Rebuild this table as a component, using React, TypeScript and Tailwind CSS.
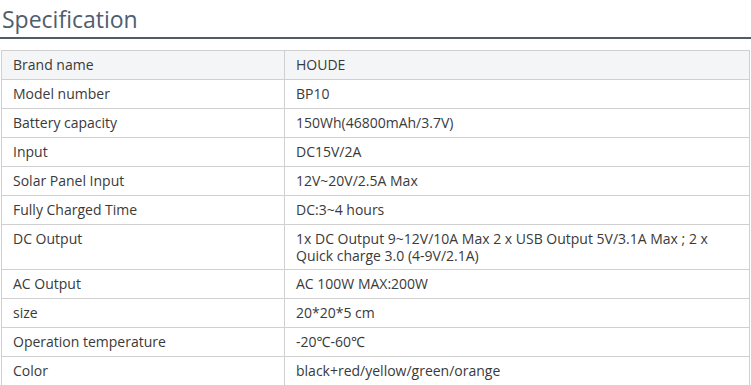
const specs: [string, string][] = [
  ["Brand name", "HOUDE"],
  ["Model number", "BP10"],
  ["Battery capacity", "150Wh(46800mAh/3.7V)"],
  ["Input", "DC15V/2A"],
  ["Solar Panel Input", "12V~20V/2.5A Max"],
  ["Fully Charged Time", "DC:3~4 hours"],
  [
    "DC Output",
    "1x DC Output 9~12V/10A Max 2 x USB Output 5V/3.1A Max ; 2 x Quick charge 3.0 (4-9V/2.1A)",
  ],
  ["AC Output", "AC 100W MAX:200W"],
  ["size", "20*20*5 cm"],
  ["Operation temperature", "-20℃-60℃"],
  ["Color", "black+red/yellow/green/orange"],
];

export default function App() {
  return (
    <div className="w-[751px] h-[385px] overflow-hidden bg-white font-['Open_Sans','Noto_Sans',sans-serif]">
      <h2 className="pl-[2px] pt-[3px] h-[37px] text-[23px] leading-[32px] text-[#4e5d70]">
        Specification
      </h2>
      <div className="h-[2px] bg-[#4f5b69]" />
      <table className="mt-[11px] ml-px w-[749px] border-collapse text-[14px] leading-[17px] text-[#3a3a3a]">
        <tbody>
          {specs.map(([k, v], i) => {
            const pad = i === 6 ? "pt-[5px] pb-[5px]" : "pt-[5px] pb-[6px]";
            return (
              <tr key={k} className={i === 0 ? "bg-[#f4f5f7]" : "bg-white"}>
                <td className={`w-[283px] border border-[#d0d0d0] px-[11px] align-top ${pad}`}>
                  {k}
                </td>
                <td className={`border border-[#d0d0d0] px-[11px] align-top ${pad}`}>
                  {v}
                </td>
              </tr>
            );
          })}
        </tbody>
      </table>
    </div>
  );
}
